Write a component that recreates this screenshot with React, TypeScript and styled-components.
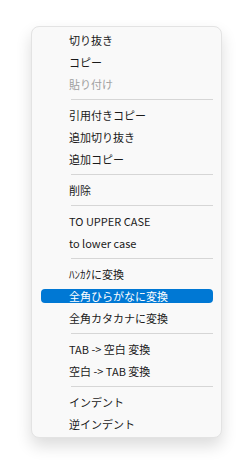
import React from "react";
import styled, { createGlobalStyle } from "styled-components";

const GlobalStyle = createGlobalStyle`
  html, body {
    margin: 0;
    padding: 0;
    background: #ffffff;
  }
  body {
    font-family: "Noto Sans CJK JP", "Noto Sans", sans-serif;
  }
`;

type Entry =
  | { kind: "item"; label: string; disabled?: boolean; active?: boolean }
  | { kind: "sep" };

const entries: Entry[] = [
  { kind: "item", label: "切り抜き" },
  { kind: "item", label: "コピー" },
  { kind: "item", label: "貼り付け", disabled: true },
  { kind: "sep" },
  { kind: "item", label: "引用付きコピー" },
  { kind: "item", label: "追加切り抜き" },
  { kind: "item", label: "追加コピー" },
  { kind: "sep" },
  { kind: "item", label: "削除" },
  { kind: "sep" },
  { kind: "item", label: "TO UPPER CASE" },
  { kind: "item", label: "to lower case" },
  { kind: "sep" },
  { kind: "item", label: "ﾊﾝｶｸに変換" },
  { kind: "item", label: "全角ひらがなに変換", active: true },
  { kind: "item", label: "全角カタカナに変換" },
  { kind: "sep" },
  { kind: "item", label: "TAB -> 空白 変換" },
  { kind: "item", label: "空白 -> TAB 変換" },
  { kind: "sep" },
  { kind: "item", label: "インデント" },
  { kind: "item", label: "逆インデント" },
];

export default function App() {
  return (
    <Page>
      <GlobalStyle />
      <Menu>
        {entries.map((e, i) =>
          e.kind === "sep" ? (
            <Separator key={i} />
          ) : (
            <Item key={i}>
              <Label $active={e.active} $disabled={e.disabled}>
                {e.label}
              </Label>
            </Item>
          )
        )}
      </Menu>
    </Page>
  );
}

const Page = styled.div`
  width: 248px;
  height: 476px;
  padding: 26px 0 0 31px;
  box-sizing: border-box;
`;

const Menu = styled.div`
  width: 191px;
  box-sizing: border-box;
  padding: 2px 0 2px;
  background: #f9f9f9;
  border: 1px solid #e3e3e3;
  border-radius: 8px;
  box-shadow: 0 8px 16px rgba(0, 0, 0, 0.14);
  display: flex;
  flex-direction: column;
`;

const Item = styled.div`
  height: 22px;
  padding: 4px 8px 4px 9px;
  box-sizing: border-box;
  display: flex;
`;

const Label = styled.div<{ $active?: boolean; $disabled?: boolean }>`
  flex: 1;
  height: 14px;
  padding-left: 28px;
  display: flex;
  align-items: center;
  font-size: 11px;
  white-space: nowrap;
  border-radius: 4px;
  background: ${(p) => (p.$active ? "#0078d4" : "transparent")};
  color: ${(p) => (p.$active ? "#ffffff" : p.$disabled ? "#a0a0a0" : "#1a1a1a")};
`;

const Separator = styled.div`
  height: 1px;
  margin: 4px 8px 4px 39px;
  background: #d6d6d6;
`;
